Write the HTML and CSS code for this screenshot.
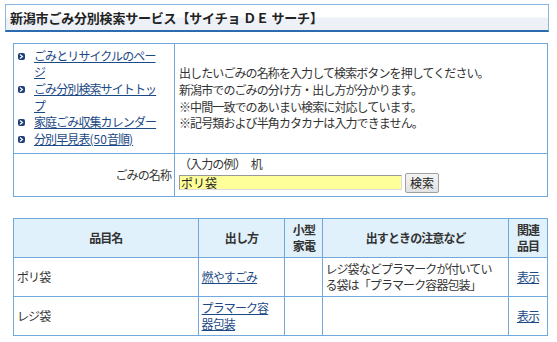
FILE: index.html
```html
<!DOCTYPE html>
<html lang="ja">
<head>
    <meta charset="UTF-8">
    <title>新潟市ごみ分別検索サービス</title>
    <link rel="stylesheet" href="styles.css">
</head>
<body>

    <!-- Title bar -->
    <div class="title-bar">
        <h1>新潟市ごみ分別検索サービス【サイチョ ＤＥ サーチ】</h1>
    </div>

    <!-- Search form -->
    <table class="search-table">
        <tr>
            <td class="menu-cell">
                <ul class="menu-list">
                    <li><a href="#">ごみとリサイクルのページ</a></li>
                    <li><a href="#">ごみ分別検索サイトトップ</a></li>
                    <li><a href="#">家庭ごみ収集カレンダー</a></li>
                    <li><a href="#">分別早見表<span class="ascii">(50</span>音順<span class="ascii">)</span></a></li>
                </ul>
            </td>
            <td class="guide-cell">
                <p>出したいごみの名称を入力して検索ボタンを押してください。<br>
                新潟市でのごみの分け方・出し方が分かります。<br>
                ※中間一致でのあいまい検索に対応しています。<br>
                ※記号類および半角カタカナは入力できません。</p>
            </td>
        </tr>
        <tr>
            <td class="label-cell">ごみの名称</td>
            <td class="input-cell">
                <div class="example">（入力の例）　机</div>
                <div class="search-row">
                    <input type="text" class="search-input" value="ポリ袋">
                    <button class="search-btn">検索</button>
                </div>
            </td>
        </tr>
    </table>

    <!-- Results -->
    <table class="result-table">
        <tr>
            <th class="col-name">品目名</th>
            <th class="col-way">出し方</th>
            <th class="col-small">小型<br>家電</th>
            <th class="col-note">出すときの注意など</th>
            <th class="col-rel">関連<br>品目</th>
        </tr>
        <tr>
            <td>ポリ袋</td>
            <td class="way"><a href="#">燃やすごみ</a></td>
            <td></td>
            <td class="note">レジ袋などプラマークが付いている袋は「プラマーク容器包装」</td>
            <td class="center"><a href="#">表示</a></td>
        </tr>
        <tr>
            <td>レジ袋</td>
            <td class="way"><a href="#">プラマーク容器包装</a></td>
            <td></td>
            <td class="note"></td>
            <td class="center"><a href="#">表示</a></td>
        </tr>
    </table>

</body>
</html>
```

FILE: styles.css
```css
:root {
    --line: #72a9dd;
    --text: #333333;
    --link: #1c4a86;
    --head-bg: #e1f1fc;
}

* {
    box-sizing: border-box;
}

body {
    margin: 0;
    padding: 4px 0 0 5px;
    width: 557px;
    font-family: "Noto Sans CJK JP", sans-serif;
    font-size: 12px;
    letter-spacing: -0.9px;
    color: var(--text);
    background: #fff;
}

a {
    color: var(--link);
}

.ascii {
    letter-spacing: 0;
}

/* Title bar */
.title-bar {
    width: 544px;
    height: 28px;
    border: 1px solid #8db5dd;
    border-bottom: 2px solid #2b6cb0;
    background: linear-gradient(#ffffff 0%, #ffffff 45%, #edf0f7 55%, #edf0f7 100%);
    padding: 4px 0 0 4px;
}

.title-bar h1 {
    margin: 0;
    font-size: 13px;
    font-weight: bold;
    line-height: 18px;
    letter-spacing: -0.2px;
    color: #222;
}

/* Search table */
table {
    border-collapse: collapse;
    margin-left: 8px;
    width: 535px;
}

td, th {
    border: 1px solid var(--line);
}

.search-table {
    margin-top: 11px;
}

.search-table td {
    line-height: 16.6px;
}

.menu-cell {
    width: 161px;
    height: 110px;
    padding: 1px 13px 3px 4px;
    vertical-align: middle;
}

.menu-list {
    list-style: none;
    margin: 0;
    padding: 0;
}

.menu-list li {
    position: relative;
    padding-left: 16px;
}

.menu-list li::before {
    content: "";
    position: absolute;
    left: 0;
    top: 5px;
    width: 7px;
    height: 7px;
    border-radius: 2px;
    background: #1d3f78 url("data:image/svg+xml;utf8,<svg xmlns='http://www.w3.org/2000/svg' viewBox='0 0 7 7'><path d='M2 1.5 L4.5 3.5 L2 5.5' fill='none' stroke='white' stroke-width='1.2'/></svg>") no-repeat center;
}

.guide-cell {
    padding: 0 4px;
    vertical-align: middle;
}

.guide-cell p {
    margin: 0;
}

.label-cell {
    height: 43px;
    text-align: right;
    padding: 0 3px 0 0;
    vertical-align: middle;
}

.input-cell {
    padding: 1px 4px 2px;
}

.search-row {
    display: flex;
    align-items: center;
    gap: 3px;
}

.search-input {
    width: 223px;
    height: 15px;
    margin: 0;
    padding: 0 1px;
    border: 1px solid;
    border-color: #999 #ddd #ddd #999;
    background: #ffff99;
    font: inherit;
    font-size: 12px;
    color: #222;
}

.search-btn {
    width: 34px;
    height: 20px;
    margin: 0;
    padding: 0;
    border: 1px solid #a0a0a0;
    border-radius: 2px;
    background: linear-gradient(#f4f4f4, #e2e2e2);
    font: inherit;
    font-size: 12px;
    color: #222;
}

/* Result table */
.result-table {
    margin-top: 21px;
}

.result-table th {
    height: 39px;
    background: var(--head-bg);
    font-weight: bold;
    line-height: 16px;
    padding: 0;
}

.result-table td {
    height: 39px;
    padding: 0 3px;
    line-height: 16px;
}

.result-table td.way {
    padding-right: 9px;
}

.result-table td.note {
    padding: 0 12px 0 2px;
}

.col-name { width: 185px; }
.col-way { width: 87px; }
.col-small { width: 38px; }
.col-note { width: 186px; }
.col-rel { width: 39px; }

.center {
    text-align: center;
}
```
